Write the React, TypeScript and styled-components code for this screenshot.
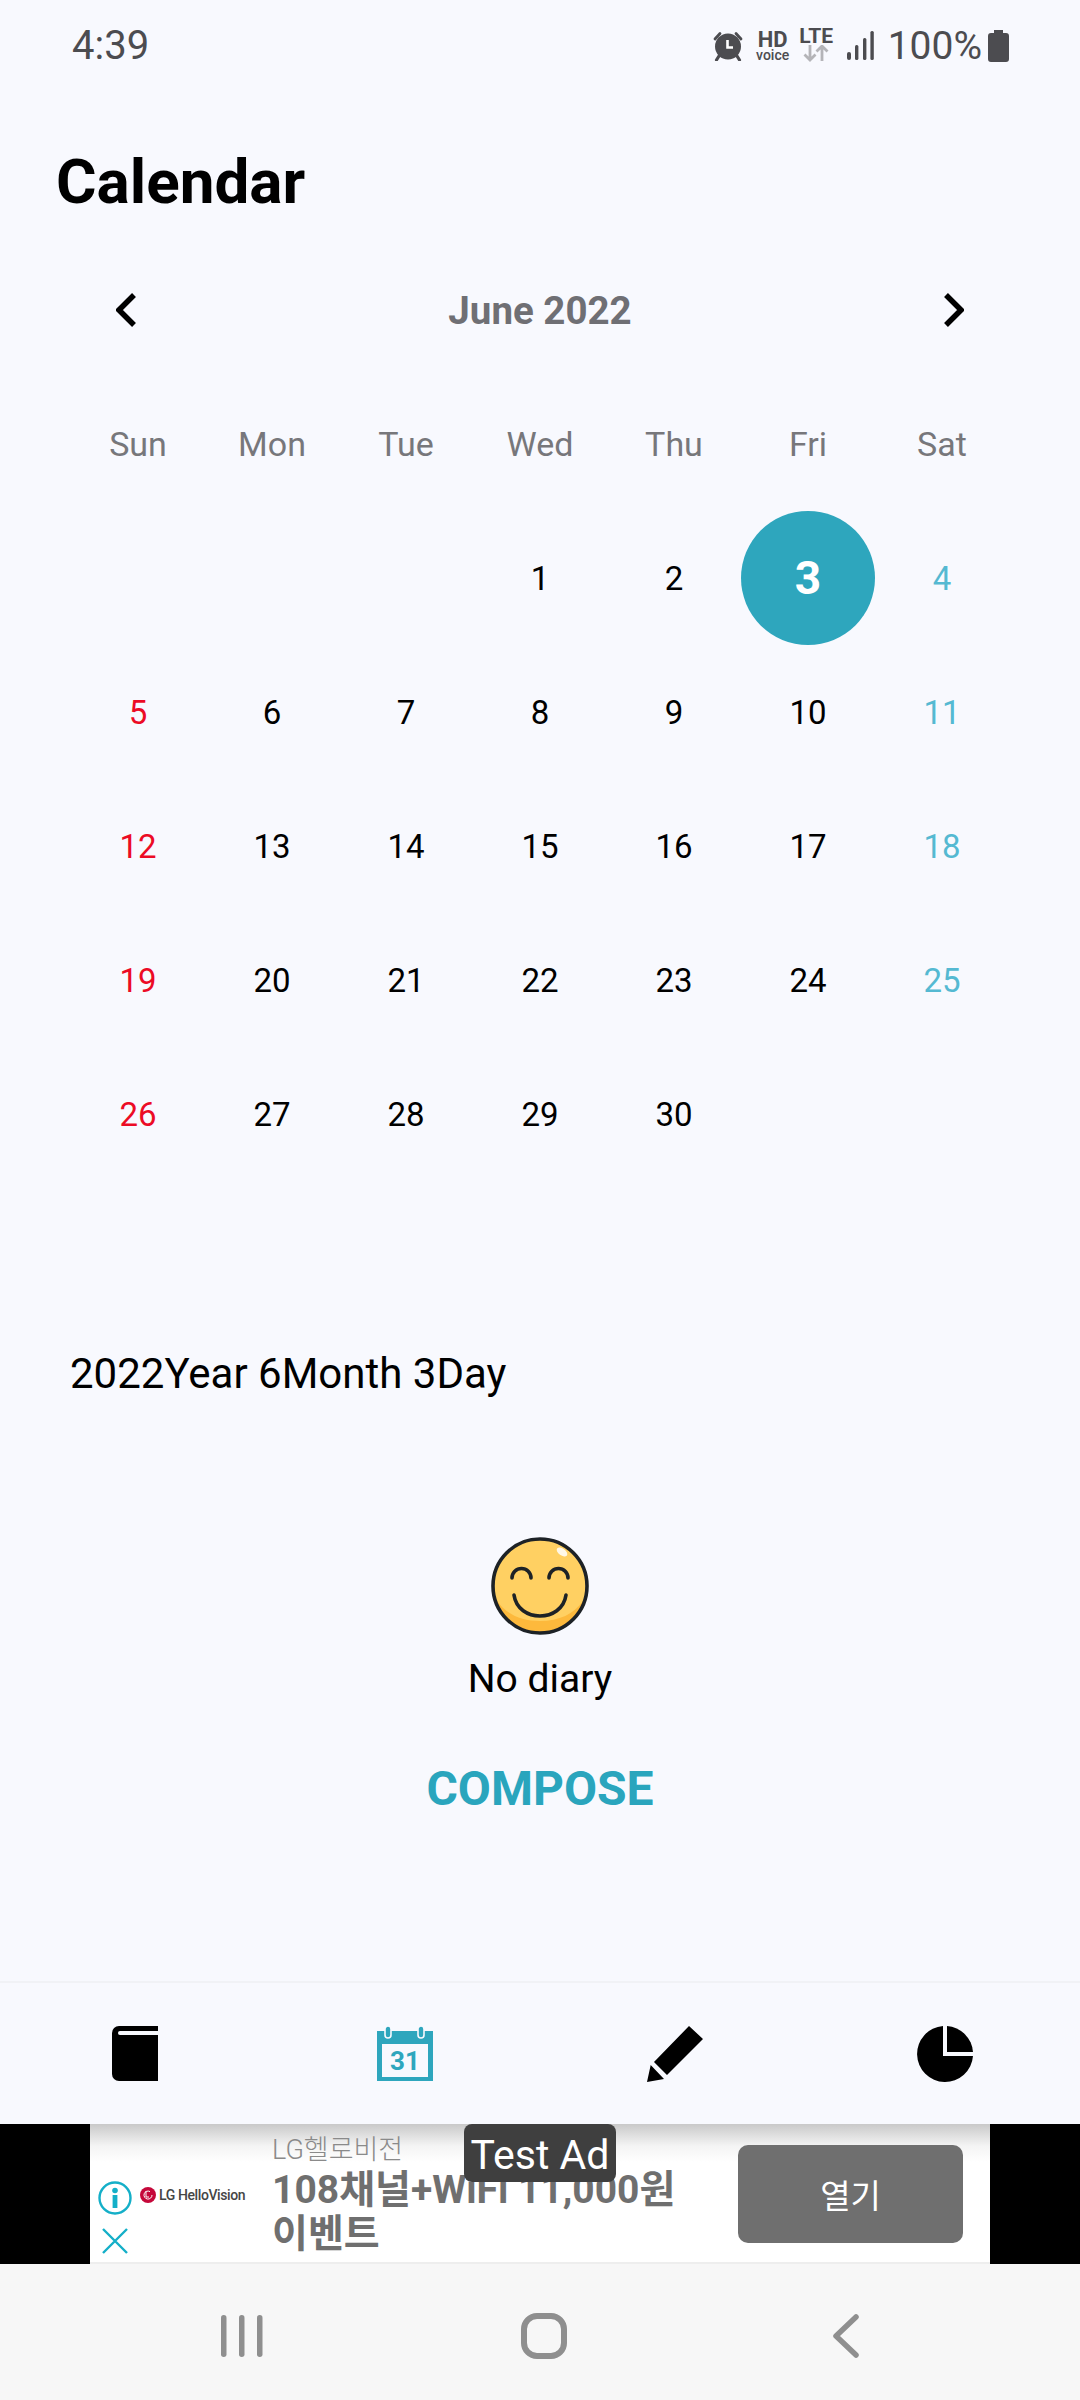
import styled, { createGlobalStyle } from 'styled-components'

const GlobalStyle = createGlobalStyle`
	html, body {
		margin: 0;
		padding: 0;
		background: #f8f9fe;
	}
	* {
		box-sizing: border-box;
	}
`

const Page = styled.div`
	width: 1080px;
	height: 2400px;
	display: flex;
	flex-direction: column;
	background: #f8f9fe;
	font-family: Roboto, 'Noto Sans CJK KR', sans-serif;
	overflow: hidden;
`

const StatusBar = styled.div`
	height: 88px;
	display: flex;
	align-items: center;
	justify-content: space-between;
	padding: 3px 72px 0;
	color: #4c4c50;
`

const Clock = styled.span`
	font-size: 40px;
`

const StatusIcons = styled.div`
	display: flex;
	align-items: center;
	margin-right: -1px;
`

const HdBadge = styled.div`
	width: 34px;
	margin: 0 9px 0 12px;
	display: flex;
	flex-direction: column;
	align-items: center;
	font-weight: 700;
	font-size: 22px;
	line-height: 18px;
`

const VoiceLabel = styled.span`
	font-size: 14px;
	font-weight: 500;
	line-height: 12px;
`

const LteBadge = styled.div`
	width: 35px;
	display: flex;
	flex-direction: column;
	align-items: center;
	font-size: 21px;
	font-weight: 700;
	line-height: 17px;
	margin-bottom: 2px;
`

const BatteryText = styled.span`
	font-size: 39px;
	margin: 0 6px 0 14px;
`

const Title = styled.h1`
	margin: 48px 0 0;
	height: 100px;
	padding-left: 56px;
	font-size: 62px;
	line-height: 92px;
	font-weight: 700;
	color: #000;
`

const MonthNav = styled.div`
	height: 64px;
	margin-top: 42px;
	padding: 0 116px;
	display: flex;
	align-items: center;
	justify-content: space-between;
`

const MonthLabel = styled.span`
	font-size: 38.5px;
	font-weight: 700;
	color: #6f6f74;
`

const CalendarGrid = styled.div`
	margin: 35px 0 0 71px;
	width: 938px;
	display: grid;
	grid-template-columns: repeat(7, 134px);
	grid-auto-rows: 134px;
`

const Weekday = styled.div`
	display: flex;
	align-items: center;
	justify-content: center;
	font-size: 34px;
	color: #77777b;
`

type DayProps = {
	$tone?: 'sun' | 'sat'
	$selected?: boolean
}

const Day = styled.div<DayProps>`
	display: flex;
	align-items: center;
	justify-content: center;
	font-size: ${({ $selected }) => ($selected ? '46px' : '33px')};
	font-weight: ${({ $selected }) => ($selected ? 700 : 400)};
	border-radius: 50%;
	background: ${({ $selected }) => ($selected ? '#2ea6bd' : 'transparent')};
	color: ${({ $selected, $tone }) =>
		$selected ? '#fff' : $tone === 'sun' ? '#ec0b25' : $tone === 'sat' ? '#55b9d2' : '#000'};
`

const DateLabel = styled.div`
	margin: 168px 0 0 70px;
	height: 50px;
	font-size: 42px;
	line-height: 50px;
	color: #000;
`

const EmptyState = styled.div`
	flex: 1;
	display: flex;
	flex-direction: column;
	align-items: center;
	padding-top: 138px;
`

const EmptyText = styled.div`
	margin-top: 20px;
	height: 48px;
	font-size: 39px;
	line-height: 48px;
	color: #000;
`

const ComposeButton = styled.button`
	margin-top: 58px;
	padding: 0;
	border: 0;
	background: none;
	font-family: inherit;
	font-size: 48px;
	line-height: 56px;
	font-weight: 700;
	color: #2aa5bd;
`

const TabBar = styled.nav`
	height: 143px;
	display: grid;
	grid-template-columns: repeat(4, 1fr);
	align-items: center;
	justify-items: center;
	border-top: 2px solid #f1f2f6;
`

const AdBanner = styled.div`
	position: relative;
	height: 140px;
	display: flex;
	justify-content: center;
	background: #000;
`

const AdCard = styled.div`
	width: 900px;
	display: flex;
	align-items: center;
	background: linear-gradient(#c9c9c9 0, #f4f4f4 22px, #fff 38px);
	box-shadow: inset 0 -2px #eee;
`

const AdIcons = styled.div`
	width: 50px;
	height: 100%;
	display: flex;
	flex-direction: column;
	align-items: center;
	justify-content: flex-end;
	gap: 13px;
	padding-bottom: 10px;
`

const AdLogo = styled.div`
	width: 132px;
	display: flex;
	align-items: center;
	gap: 3px;
	font-size: 14px;
	font-weight: 500;
	letter-spacing: -0.4px;
	color: #454545;
	margin-top: 2px;
`

const AdCopy = styled.div`
	width: 466px;
`

const AdBrand = styled.div`
	font-size: 27px;
	font-weight: 300;
	line-height: 35px;
	color: #8a8a8a;
`

const AdHeadline = styled.div`
	font-size: 39px;
	font-weight: 700;
	line-height: 44px;
	color: #6f6f6f;
	white-space: nowrap;
`

const AdButton = styled.div`
	width: 225px;
	height: 98px;
	display: flex;
	align-items: center;
	justify-content: center;
	border-radius: 10px;
	background: #6f6f6f;
	color: #fff;
	font-size: 33px;
`

const TestBadge = styled.div`
	position: absolute;
	top: 0;
	left: 464px;
	width: 152px;
	height: 58px;
	display: flex;
	align-items: center;
	justify-content: center;
	padding-top: 3px;
	border-radius: 8px;
	background: #3f3f3f;
	color: #fff;
	font-size: 41px;
`

const NavBar = styled.div`
	height: 136px;
	background: #f7f7f7;
	display: grid;
	grid-template-columns: repeat(3, 302px);
	align-items: center;
	justify-items: center;
	padding: 8px 83px 0 91px;
`

const WEEKDAYS = ['Sun', 'Mon', 'Tue', 'Wed', 'Thu', 'Fri', 'Sat']
const LEADING_BLANKS = 3
const DAYS = Array.from({ length: 30 }, (_, i) => i + 1)
const SELECTED = 3

function dayTone(index: number) {
	if (index % 7 === 0) return 'sun'
	if (index % 7 === 6) return 'sat'
	return undefined
}

function Chevron({ flip }: { flip?: boolean }) {
	return (
		<svg width="21" height="34" viewBox="0 0 21 34">
			<path
				d={flip ? 'M3 2 L18 17 L3 32' : 'M18 2 L3 17 L18 32'}
				fill="none"
				stroke="#000"
				strokeWidth="5.5"
			/>
		</svg>
	)
}

function AlarmIcon() {
	return (
		<svg width="32" height="30" viewBox="0 0 32 30">
			<path d="M3 8 L8 2.5 M29 8 L24 2.5" stroke="#4c4c50" strokeWidth="2.8" strokeLinecap="round" />
			<path d="M7 25 L4.5 29 M25 25 L27.5 29" stroke="#4c4c50" strokeWidth="3.2" strokeLinecap="round" />
			<circle cx="16" cy="15.5" r="13" fill="#4c4c50" />
			<path d="M15.5 9 V16.5 H21" fill="none" stroke="#fff" strokeWidth="2.6" />
		</svg>
	)
}

function DataArrows() {
	return (
		<svg width="26" height="17" viewBox="0 0 26 17">
			<path
				d="M7 0 V15 M1.5 9.5 L7 15 L12.5 9.5 M19 16 V1 M13.5 6.5 L19 1 L24.5 6.5"
				fill="none"
				stroke="#b4b4b8"
				strokeWidth="2.8"
			/>
		</svg>
	)
}

function SignalIcon() {
	return (
		<svg width="27" height="29" viewBox="0 0 27 29" style={{ marginLeft: 13 }}>
			<rect x="0" y="21" width="4" height="8" rx="2" fill="#4c4c50" />
			<rect x="8" y="14" width="3.4" height="15" rx="1.5" fill="#4c4c50" />
			<rect x="16" y="7" width="3.4" height="22" rx="1.5" fill="#4c4c50" />
			<rect x="23.4" y="0" width="3.4" height="29" rx="1.5" fill="#4c4c50" />
		</svg>
	)
}

function BatteryIcon() {
	return (
		<svg width="21" height="32" viewBox="0 0 21 32">
			<path
				d="M6 0 H15 V3 H18 a3 3 0 0 1 3 3 V29 a3 3 0 0 1 -3 3 H3 a3 3 0 0 1 -3 -3 V6 a3 3 0 0 1 3 -3 H6 Z"
				fill="#4c4c50"
			/>
		</svg>
	)
}

function SmileFace() {
	return (
		<svg width="98" height="98" viewBox="0 0 98 98">
			<circle cx="49" cy="49" r="47" fill="#fdb93c" />
			<path d="M2 49 a47 47 0 0 1 94 0 c0 6 -2 11 -4 15 c-9 13 -24 20 -43 20 c-19 0 -34 -7 -43 -20 c-2 -4 -4 -9 -4 -15 Z" fill="#ffd062" />
			<ellipse cx="71" cy="15" rx="6" ry="3.5" transform="rotate(35 71 15)" fill="#fff" opacity="0.85" />
			<circle cx="49" cy="49" r="47" fill="none" stroke="#1d2226" strokeWidth="3.6" />
			<path
				d="M21 41 a9.5 9.5 0 0 1 19 0 M58 41 a9.5 9.5 0 0 1 19 0 M23 58 c4 28 48 28 52 0"
				fill="none"
				stroke="#1d2226"
				strokeWidth="3.6"
				strokeLinecap="round"
			/>
		</svg>
	)
}

function BookIcon() {
	return (
		<svg width="46" height="55" viewBox="0 0 46 55">
			<path d="M7 0 H46 V55 H7 a7 7 0 0 1 -7 -7 V7 a7 7 0 0 1 7 -7 Z" fill="#000" />
			<path d="M8 5 H46 V9 H8 a2 2 0 0 1 0 -4 Z" fill="#f8f9fe" />
		</svg>
	)
}

function CalendarIcon() {
	return (
		<svg width="56" height="55" viewBox="0 0 56 55">
			<rect x="0" y="5" width="56" height="50" fill="#2ea6bd" />
			<rect x="5" y="18" width="46" height="33" fill="#f8f9fe" />
			<rect x="8" y="0" width="6" height="12" rx="3" fill="#2ea6bd" stroke="#f8f9fe" strokeWidth="1.6" />
			<rect x="41" y="0" width="6" height="12" rx="3" fill="#2ea6bd" stroke="#f8f9fe" strokeWidth="1.6" />
			<text x="28" y="44" textAnchor="middle" fontFamily="Roboto" fontWeight="700" fontSize="26" fill="#2ea6bd">
				31
			</text>
		</svg>
	)
}

function PencilIcon() {
	return (
		<svg width="56" height="56" viewBox="0 0 56 56">
			<path d="M42 0 L56 13 L20 49 L7 36 Z M3.7 39 L17 53 L0 56 Z" fill="#000" />
		</svg>
	)
}

function PieIcon() {
	return (
		<svg width="56" height="56" viewBox="0 0 56 56">
			<path d="M26 0 A28 28 0 1 0 56 30 H26 Z" fill="#000" />
			<path d="M30 0 A28 28 0 0 1 56 26 H30 Z" fill="#000" />
		</svg>
	)
}

function InfoIcon() {
	return (
		<svg width="34" height="34" viewBox="0 0 34 34">
			<circle cx="17" cy="17" r="15.5" fill="none" stroke="#14afc8" strokeWidth="2.4" />
			<circle cx="17" cy="9.5" r="2.8" fill="#14afc8" />
			<rect x="14.6" y="14" width="4.8" height="13" fill="#14afc8" />
		</svg>
	)
}

function CloseIcon() {
	return (
		<svg width="26" height="26" viewBox="0 0 26 26">
			<path d="M1 1 L25 25 M25 1 L1 25" stroke="#14afc8" strokeWidth="2.4" />
		</svg>
	)
}

function LgMark() {
	return (
		<svg width="16" height="16" viewBox="0 0 16 16">
			<circle cx="8" cy="8" r="8" fill="#c5083a" />
			<path d="M6 4 V10 H9 M12 8 a4 4 0 1 1 -2 -3.4" fill="none" stroke="#fff" strokeWidth="1" />
		</svg>
	)
}

function RecentsIcon() {
	return (
		<svg width="42" height="44" viewBox="0 0 42 44">
			<rect x="0" y="1" width="5.5" height="42" rx="2.7" fill="#8f8f8f" />
			<rect x="18" y="1" width="5.5" height="42" rx="2.7" fill="#8f8f8f" />
			<rect x="36" y="1" width="5.5" height="42" rx="2.7" fill="#8f8f8f" />
		</svg>
	)
}

function HomeIcon() {
	return (
		<svg width="46" height="46" viewBox="0 0 46 46">
			<rect x="3" y="3" width="40" height="40" rx="13" fill="none" stroke="#8f8f8f" strokeWidth="6" />
		</svg>
	)
}

function BackIcon() {
	return (
		<svg width="26" height="44" viewBox="0 0 26 44">
			<path d="M23 3 L3 22 L23 41" fill="none" stroke="#8f8f8f" strokeWidth="5.5" strokeLinecap="round" strokeLinejoin="round" />
		</svg>
	)
}

export default function App() {
	return (
		<Page>
			<GlobalStyle />
			<StatusBar>
				<Clock>4:39</Clock>
				<StatusIcons>
					<AlarmIcon />
					<HdBadge>
						HD
						<VoiceLabel>voice</VoiceLabel>
					</HdBadge>
					<LteBadge>
						LTE
						<DataArrows />
					</LteBadge>
					<SignalIcon />
					<BatteryText>100%</BatteryText>
					<BatteryIcon />
				</StatusIcons>
			</StatusBar>

			<Title>Calendar</Title>

			<MonthNav>
				<Chevron />
				<MonthLabel>June 2022</MonthLabel>
				<Chevron flip />
			</MonthNav>

			<CalendarGrid>
				{WEEKDAYS.map((name) => (
					<Weekday key={name}>{name}</Weekday>
				))}
				{Array.from({ length: LEADING_BLANKS }, (_, i) => (
					<Day key={`blank-${i}`} />
				))}
				{DAYS.map((day) => (
					<Day
						key={day}
						$selected={day === SELECTED}
						$tone={dayTone(day + LEADING_BLANKS - 1)}
					>
						{day}
					</Day>
				))}
			</CalendarGrid>

			<DateLabel>2022Year 6Month 3Day</DateLabel>

			<EmptyState>
				<SmileFace />
				<EmptyText>No diary</EmptyText>
				<ComposeButton type="button">COMPOSE</ComposeButton>
			</EmptyState>

			<TabBar>
				<BookIcon />
				<CalendarIcon />
				<PencilIcon />
				<PieIcon />
			</TabBar>

			<AdBanner>
				<AdCard>
					<AdIcons>
						<InfoIcon />
						<CloseIcon />
					</AdIcons>
					<AdLogo>
						<LgMark />
						LG HelloVision
					</AdLogo>
					<AdCopy>
						<AdBrand>LG헬로비전</AdBrand>
						<AdHeadline>
							108채널+WiFi 11,000원
							<br />
							이벤트
						</AdHeadline>
					</AdCopy>
					<AdButton>열기</AdButton>
				</AdCard>
				<TestBadge>Test Ad</TestBadge>
			</AdBanner>

			<NavBar>
				<RecentsIcon />
				<HomeIcon />
				<BackIcon />
			</NavBar>
		</Page>
	)
}
